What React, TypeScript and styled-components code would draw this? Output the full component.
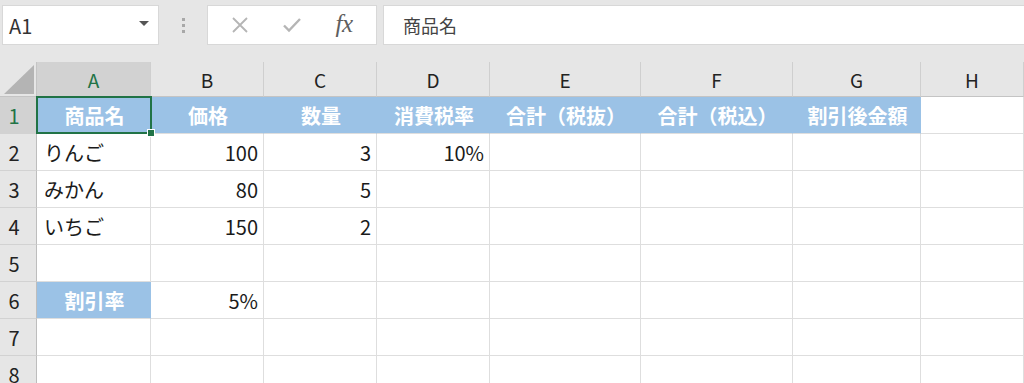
import React from "react";
import styled, { createGlobalStyle, css } from "styled-components";

const GlobalStyle = createGlobalStyle`
  html, body {
    margin: 0;
    padding: 0;
    background: #ffffff;
    overflow: hidden;
  }
  body {
    font-family: "Noto Sans CJK JP", "Noto Sans", sans-serif;
    color: #1a1a1a;
  }
`;

const Colors = {
  Chrome: "#e6e6e6",
  HeaderActive: "#d2d2d2",
  Green: "#217346",
  Grid: "#dedede",
  HeaderLine: "#c4c4c4",
  Fill: "#9bc2e6",
};

const Page = styled.div`
  display: flex;
  flex-direction: column;
  width: 1024px;
  height: 383px;
  overflow: hidden;
`;

/* ---------- formula bar ---------- */

const Toolbar = styled.div`
  flex-shrink: 0;
  display: flex;
  align-items: flex-start;
  height: 62px;
  padding: 5px 0 0 2px;
  box-sizing: border-box;
  background: ${Colors.Chrome};
`;

const Box = styled.div`
  display: flex;
  align-items: center;
  height: 40px;
  box-sizing: border-box;
  background: #ffffff;
  border: 1px solid #d8d8d8;
`;

const NameBox = styled(Box)`
  width: 157px;
  justify-content: space-between;
  padding: 0 9px 0 6px;
  font-size: 20px;
  color: #333;
`;

const DropArrow = styled.span`
  width: 0;
  height: 0;
  border-left: 5px solid transparent;
  border-right: 5px solid transparent;
  border-top: 5px solid #555;
  margin-top: -3px;
`;

const Grip = styled.div`
  display: flex;
  flex-direction: column;
  align-items: center;
  justify-content: center;
  gap: 3px;
  width: 48px;
  height: 40px;

  span {
    width: 3px;
    height: 3px;
    background: #a8a8a8;
  }
`;

const ButtonsBox = styled(Box)`
  width: 170px;
  justify-content: space-around;
  padding: 0 6px;
`;

const IconButton = styled.span`
  display: flex;
  align-items: center;
  justify-content: center;
  width: 40px;
  height: 30px;
`;

const Fx = styled.span`
  font-family: "Liberation Serif", "DejaVu Serif", serif;
  font-style: italic;
  font-size: 25px;
  color: #5e5e5e;
  letter-spacing: -0.5px;
  margin-top: -2px;
`;

const FormulaInput = styled(Box)`
  flex: 1;
  margin-left: 6px;
  padding-left: 19px;
  font-size: 18px;
  color: #444;
  border-right: none;
`;

/* ---------- sheet ---------- */

const Sheet = styled.div`
  flex-shrink: 0;
  display: grid;
  grid-template-columns: 37px 114px 113px 113px 113px 151px 152px 128px 1fr;
  grid-template-rows: 35px;
  grid-auto-rows: 37px;
`;

const HeaderCell = styled.div<{ $active?: boolean }>`
  display: flex;
  align-items: center;
  justify-content: center;
  box-sizing: border-box;
  background: ${(p) => (p.$active ? Colors.HeaderActive : Colors.Chrome)};
  border-right: 1px solid #cfcfcf;
  border-bottom: 1px solid ${Colors.HeaderLine};
  font-size: 19px;
  color: ${(p) => (p.$active ? Colors.Green : "#222")};
`;

const Corner = styled(HeaderCell)`
  align-items: flex-end;
  justify-content: flex-end;
  padding: 0 2px 2px 0;
  border-right-color: ${Colors.HeaderLine};
`;

const RowHeader = styled(HeaderCell)`
  padding-right: 8px;
  font-size: 20px;
  border-right-color: #bdbdbd;
  border-bottom-color: #d2d2d2;
`;

const Cell = styled.div<{
  $align?: "left" | "right" | "center";
  $fill?: boolean;
}>`
  position: relative;
  display: flex;
  align-items: center;
  justify-content: ${(p) =>
    p.$align === "right"
      ? "flex-end"
      : p.$align === "center"
      ? "center"
      : "flex-start"};
  padding: 0 5px 0 7px;
  box-sizing: border-box;
  white-space: nowrap;
  border-right: 1px solid ${Colors.Grid};
  border-bottom: 1px solid ${Colors.Grid};
  font-size: 20px;
  color: #1a1a1a;

  ${(p) =>
    p.$fill &&
    css`
      background: ${Colors.Fill};
      border-right-color: ${Colors.Fill};
      color: #ffffff;
      font-weight: 700;
    `}
`;

const Selection = styled.div`
  position: absolute;
  z-index: 2;
  left: -1px;
  top: -1px;
  right: -2px;
  bottom: -1px;
  border: 2px solid ${Colors.Green};
  pointer-events: none;

  &::after {
    content: "";
    position: absolute;
    right: -5px;
    bottom: -5px;
    width: 6px;
    height: 6px;
    background: ${Colors.Green};
    border: 1px solid #ffffff;
  }
`;

type CellData = {
  text?: string;
  align?: "left" | "right" | "center";
  fill?: boolean;
};

const columns = ["A", "B", "C", "D", "E", "F", "G", "H"];

const header = (text: string): CellData => ({ text, align: "center", fill: true });

const rows: CellData[][] = [
  [
    header("商品名"),
    header("価格"),
    header("数量"),
    header("消費税率"),
    header("合計（税抜）"),
    header("合計（税込）"),
    header("割引後金額"),
    {},
  ],
  [
    { text: "りんご" },
    { text: "100", align: "right" },
    { text: "3", align: "right" },
    { text: "10%", align: "right" },
    {},
    {},
    {},
    {},
  ],
  [
    { text: "みかん" },
    { text: "80", align: "right" },
    { text: "5", align: "right" },
    {},
    {},
    {},
    {},
    {},
  ],
  [
    { text: "いちご" },
    { text: "150", align: "right" },
    { text: "2", align: "right" },
    {},
    {},
    {},
    {},
    {},
  ],
  [{}, {}, {}, {}, {}, {}, {}, {}],
  [header("割引率"), { text: "5%", align: "right" }, {}, {}, {}, {}, {}, {}],
  [{}, {}, {}, {}, {}, {}, {}, {}],
  [{}, {}, {}, {}, {}, {}, {}, {}],
];

const CloseIcon = () => (
  <svg width="18" height="18" viewBox="0 0 18 18">
    <path d="M2 2 L16 16 M16 2 L2 16" stroke="#b5b5b5" strokeWidth="1.8" fill="none" />
  </svg>
);

const CheckIcon = () => (
  <svg width="20" height="18" viewBox="0 0 20 18">
    <path
      d="M2 9.5 L7 14.5 L18 3"
      stroke="#b5b5b5"
      strokeWidth="2.4"
      fill="none"
      strokeLinejoin="miter"
    />
  </svg>
);

const CornerTriangle = () => (
  <svg width="30" height="29" viewBox="0 0 30 29">
    <polygon points="30,0 30,29 0,29" fill="#b4b4b4" />
  </svg>
);

const App: React.FC = () => (
  <>
    <GlobalStyle />
    <Page>
      <Toolbar>
        <NameBox>
          A1
          <DropArrow />
        </NameBox>
        <Grip>
          <span />
          <span />
          <span />
        </Grip>
        <ButtonsBox>
          <IconButton>
            <CloseIcon />
          </IconButton>
          <IconButton>
            <CheckIcon />
          </IconButton>
          <IconButton>
            <Fx>fx</Fx>
          </IconButton>
        </ButtonsBox>
        <FormulaInput>商品名</FormulaInput>
      </Toolbar>

      <Sheet>
        <Corner>
          <CornerTriangle />
        </Corner>
        {columns.map((c) => (
          <HeaderCell key={c} $active={c === "A"}>
            {c}
          </HeaderCell>
        ))}

        {rows.map((row, r) => (
          <React.Fragment key={r}>
            <RowHeader $active={r === 0}>{r + 1}</RowHeader>
            {row.map((cell, c) => (
              <Cell key={c} $align={cell.align} $fill={cell.fill}>
                {cell.text}
                {r === 0 && c === 0 && <Selection />}
              </Cell>
            ))}
          </React.Fragment>
        ))}
      </Sheet>
    </Page>
  </>
);

export default App;
